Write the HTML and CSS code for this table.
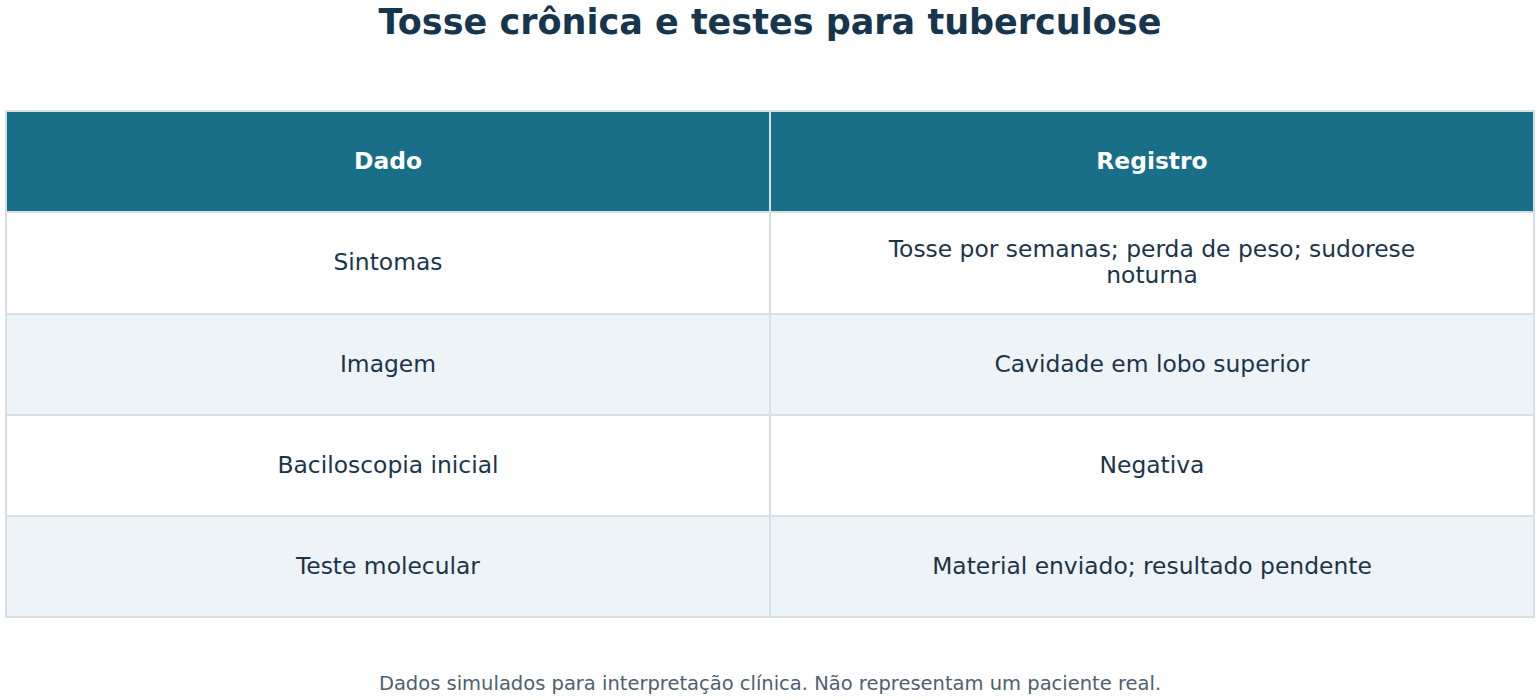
FILE: index.html
```html
<!DOCTYPE html>
<html lang="pt">
<head>
<meta charset="utf-8">
<title>Tosse crônica e testes para tuberculose</title>
<link rel="stylesheet" href="styles.css">
</head>
<body>
<main class="page">
  <h1 class="title">Tosse crônica e testes para tuberculose</h1>
  <table class="data">
    <thead>
      <tr><th>Dado</th><th>Registro</th></tr>
    </thead>
    <tbody>
      <tr><td>Sintomas</td><td>Tosse por semanas; perda de peso; sudorese<br>noturna</td></tr>
      <tr class="alt"><td>Imagem</td><td>Cavidade em lobo superior</td></tr>
      <tr><td>Baciloscopia inicial</td><td>Negativa</td></tr>
      <tr class="alt"><td>Teste molecular</td><td>Material enviado; resultado pendente</td></tr>
    </tbody>
  </table>
  <p class="note">Dados simulados para interpretação clínica. Não representam um paciente real.</p>
</main>
</body>
</html>
```

FILE: styles.css
```css
html, body {
  margin: 0;
  padding: 0;
  background: #ffffff;
}
body {
  font-family: "DejaVu Sans", "Noto Sans", sans-serif;
  color: #1b3449;
}
.page {
  padding: 0 5px 0 5px;
}
.title {
  margin: 2px 0 0 0;
  font-size: 35px;
  line-height: 40px;
  font-weight: bold;
  text-align: center;
  color: #17354c;
}
.data {
  margin-top: 68px;
  width: 100%;
  border-collapse: collapse;
  table-layout: fixed;
  font-size: 23.4px;
}
.data th, .data td {
  border: 2px solid #d3e0e8;
  text-align: center;
  vertical-align: middle;
  height: 98.3px;
  padding: 0 20px 1px 20px;
  line-height: 26px;
}
.data th {
  background: #196e88;
  color: #ffffff;
  font-weight: bold;
}
.data td {
  color: #1b3449;
  background: #ffffff;
}
.data tr.alt td {
  background: #eef3f7;
}
.note {
  margin: 55px 0 0 0;
  text-align: center;
  font-size: 19.5px;
  line-height: 22px;
  color: #4d6070;
}
```
